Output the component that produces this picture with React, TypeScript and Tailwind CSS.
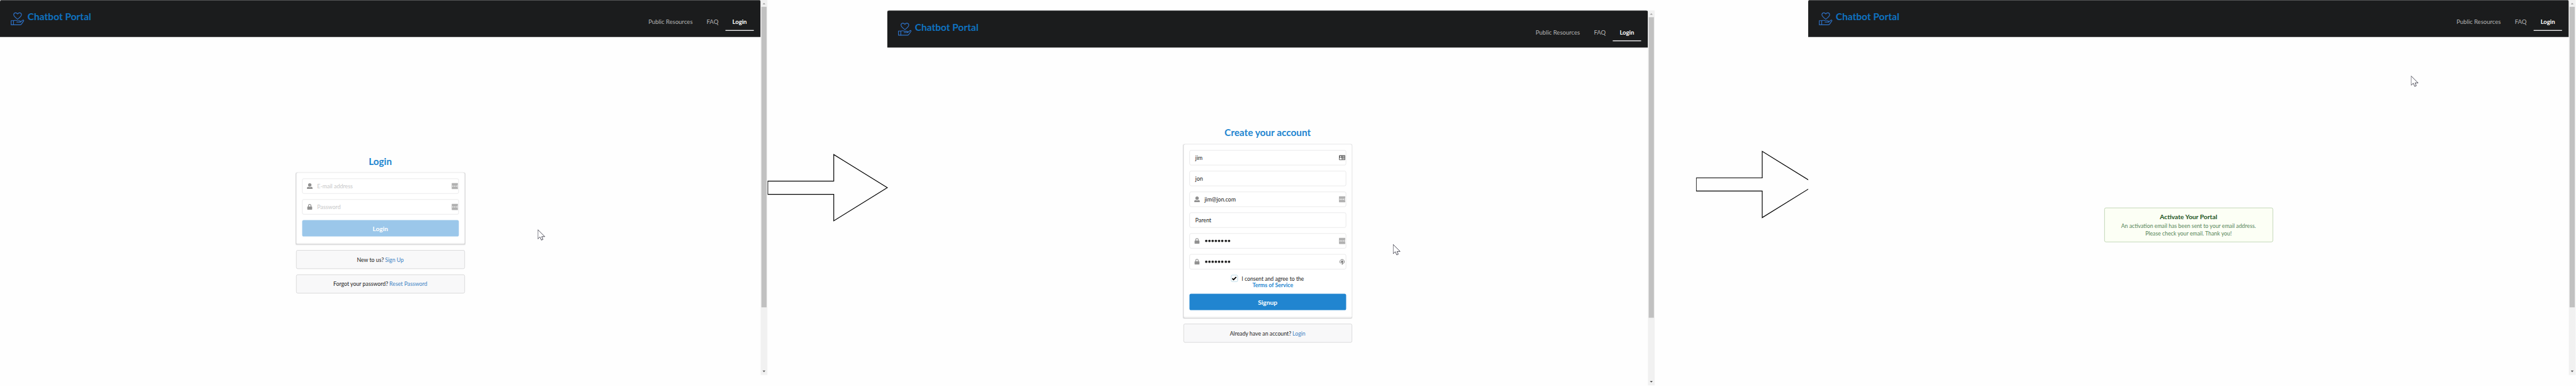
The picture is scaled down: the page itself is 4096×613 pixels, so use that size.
import type { ReactNode } from 'react';

function LogoIcon() {
  return (
    <svg className="mt-[29px] ml-[26px] h-[34px] w-[35px] shrink-0" viewBox="0 0 35 34" fill="none" stroke="#2e72c8" strokeWidth="1.8" strokeLinejoin="round" strokeLinecap="round">
      <path d="M18 18 C12.5 13.500 8.300 10.800 8.300 6.800 C8.300 1.500 15.200 .2 18 5 C20.800 .2 27.700 1.500 27.700 6.800 C27.700 10.800 23.500 13.500 18 18Z" />
      <path d="M1.900 21.500 H7.800 V32 H1.900Z" />
      <path d="M7.800 22 C11 20 14 20.600 16.500 22 H22.500 C25.500 22 25.500 25 23 25.200 L16 25.500 H25 L30.500 20.600 C32 19.400 34.500 20.600 33 22.600 L27.500 30.500 C26.500 31.800 25.500 32 24 32 H7.800" />
    </svg>
  );
}

function UserIcon() {
  return (
    <svg className="ml-[11px] h-[14px] w-[14px] shrink-0" viewBox="0 0 14 14" fill="#919191">
      <circle cx="7" cy="4.200" r="4.200" />
      <path d="M0 14 V12 C0 9.800 1.600 9 3.300 9 C5.500 10.200 8.500 10.200 10.700 9 C12.400 9 14 9.800 14 12 V14Z" />
    </svg>
  );
}

function LockIcon() {
  return (
    <svg className="ml-[11px] h-[14px] w-[14px] shrink-0" viewBox="0 0 14 14">
      <path d="M3.800 7 V4 A3.100 3.200 0 0 1 10 4 V7" fill="none" stroke="#919191" strokeWidth="1.800" />
      <rect x=".8" y="6" width="12.200" height="8" rx="1.200" fill="#919191" />
    </svg>
  );
}

function VaultIcon() {
  return (
    <svg className="mr-px h-4 w-4 shrink-0" viewBox="0 0 16 16">
      <rect width="16" height="16" rx="1.500" fill="#b1b1b1" />
      <circle cx="2.900" cy="8" r="1.400" fill="#fff" />
      <circle cx="7.200" cy="8" r="1.400" fill="#fff" />
      <circle cx="11.500" cy="8" r="1.400" fill="#fff" />
      <rect x="14.200" y="5" width=".8" height="6" fill="#fff" />
    </svg>
  );
}

function CardIcon() {
  return (
    <svg className="mr-px h-4 w-4 shrink-0" viewBox="0 0 16 16">
      <rect y="2" width="16" height="12" rx="1.500" fill="#636363" />
      <circle cx="4.300" cy="5.700" r="1.700" fill="#fff" />
      <path d="M1.500 12.500 V10 Q2 8 4.300 8 Q6.600 8 7 10 V12.500Z" fill="#fff" />
      <path d="M8.500 4.800 H14.500 M8.500 7.300 H14.500 M8.500 9.800 H14.500 M8.500 12.200 H14.500" stroke="#fff" strokeWidth="1" />
    </svg>
  );
}

function RefreshLockIcon() {
  return (
    <svg className="mr-px h-4 w-4 shrink-0" viewBox="0 0 16 16" fill="none" stroke="#636363">
      <path d="M4.500 12.400 A5.600 5.600 0 1 1 11 12.600 L8 13.300" strokeWidth="1.300" />
      <path d="M9 11.300 L6.300 13.300 L9 15.500Z" fill="#636363" stroke="none" />
      <path d="M6.500 7 V6 A1.500 1.500 0 0 1 9.500 6 V7" strokeWidth="1" />
      <rect x="5.300" y="6.800" width="5.400" height="3.700" fill="#636363" stroke="none" />
    </svg>
  );
}

function Cursor({ className }: { className: string }) {
  return (
    <svg className={`absolute h-[28px] w-[20px] ${className}`} viewBox="0 0 20 28">
      <path d="M.5 .8 V24 L6 19 L9.500 27 L13.500 25.300 L10.300 18.300 H18Z" fill="#fff" stroke="#1b1b2b" strokeWidth="1.2" />
    </svg>
  );
}

function NavBar() {
  return (
    <header className="flex h-[93px] justify-between rounded-t-[4px] border-y border-[#555657] bg-[#1b1c1d]">
      <div className="flex">
        <LogoIcon />
        <span className="mt-[26px] ml-[8px] text-[24.400px] leading-[30px] font-bold text-[#0f72c0]">Chatbot Portal</span>
      </div>
      <nav className="mt-[35px] mr-[17px] flex h-[41px] text-[15px] leading-[37px] text-[#b4b4b4]">
        <span className="px-[17.500px]">Public Resources</span>
        <span className="px-[17.500px]">FAQ</span>
        <span className="border-b-2 border-white px-[17.500px] font-bold text-white">Login</span>
      </nav>
    </header>
  );
}

function ScrollBar() {
  return (
    <div className="flex h-[937px] w-[17px] shrink-0 flex-col items-center bg-[#f1f1f1]">
      <svg className="h-[17px] w-[17px] shrink-0" viewBox="0 0 17 17">
        <path d="M5 11 L8.500 7 L12 11Z" fill="#a3a3a3" />
      </svg>
      <div className="h-[751px] w-[13px] bg-[#c1c1c1]" />
      <svg className="mt-auto h-[17px] w-[17px] shrink-0" viewBox="0 0 17 17">
        <path d="M5 6 H12 L8.500 10Z" fill="#505050" />
      </svg>
    </div>
  );
}

function Screen({ className, children }: { className: string; children: ReactNode }) {
  return (
    <section className={`relative flex h-[937px] shrink-0 ${className}`}>
      <div className="flex w-[1903px] shrink-0 flex-col">
        <NavBar />
        <main className="flex flex-col items-center">{children}</main>
      </div>
      <ScrollBar />
    </section>
  );
}

type FieldProps = { icon?: ReactNode; action?: ReactNode; children: ReactNode; className?: string };

function Field({ icon, action, children, className = 'text-[#212121]' }: FieldProps) {
  return (
    <div className={`flex h-[38px] items-center rounded-[4px] border border-[#dededf] bg-white ${className}`}>
      {icon}
      <span className={icon ? 'ml-3 grow' : 'ml-[14px] grow'}>{children}</span>
      {action}
    </div>
  );
}

function Panel({ className, children }: { className: string; children: ReactNode }) {
  return (
    <div className={`flex w-[422px] flex-col rounded-[4px] border border-[#d9d9da] bg-[#f7f7f7] shadow-[0_1px_2px_rgba(34,36,38,0.2)] ${className}`}>
      <div className="flex grow flex-col rounded-t-[4px] border-b border-[#d0d0d1] bg-white p-[14px]">{children}</div>
      <div className="h-[2px] shrink-0" />
    </div>
  );
}

function Note({ text, link }: { text: string; link: string }) {
  return (
    <div className="mt-[14px] flex h-[47px] w-[422px] items-center justify-center gap-[3px] rounded-[4px] border border-[#c7c8c9] bg-[#f8f8f9] text-[13.800px] text-[#212121]">
      <span>{text}</span>
      <span className="text-[#4183c4]">{link}</span>
    </div>
  );
}

function Dots() {
  return (
    <span className="flex gap-[2.100px] pl-[1.500px]">
      {Array.from({ length: 8 }, (_, i) => (
        <i key={i} className="size-[6px] rounded-full bg-[#212121]" />
      ))}
    </span>
  );
}

function Arrow() {
  return (
    <svg className="h-[170px] w-[302px] shrink-0" viewBox="0 0 302 170" fill="none" stroke="#000" strokeWidth="1.900">
      <path d="M.9 68.500 H166 V2.200 L300 85 L166 167.800 V101.500 H.9Z" />
    </svg>
  );
}

export default function App() {
  return (
    <div className="h-[613px] w-[4096px] overflow-hidden bg-[#fefefe]">
      <div className="flex h-[964px] w-[6445px] origin-top-left scale-[0.63553] overflow-hidden bg-[#fefefe] font-['Lato',sans-serif] text-[14px] leading-[20px] whitespace-nowrap">
        <Screen className="w-[1920px]">
          <h1 className="mt-[295px] text-[24px] leading-[30px] font-bold text-[#2185d0]">Login</h1>
          <Panel className="mt-[13px] h-[180px]">
            <div className="flex flex-col gap-[14px]">
              <Field icon={<UserIcon />} action={<VaultIcon />} className="text-[#c7c7c8]">E-mail address</Field>
              <Field icon={<LockIcon />} action={<VaultIcon />} className="text-[#c7c7c8]">Password</Field>
              <button className="h-[41px] rounded-[4px] bg-[#9bc7ea] text-[16px] font-bold text-white">Login</button>
            </div>
          </Panel>
          <Note text="New to us?" link="Sign Up" />
          <Note text="Forgot your password?" link="Reset Password" />
          <Cursor className="top-[573px] left-[1345px]" />
        </Screen>

        <div className="mt-[384px] w-[300px] shrink-0">
          <Arrow />
        </div>

        <Screen className="mt-[26px] w-[1920px]">
          <h1 className="mt-[197px] text-[24.150px] leading-[30px] font-bold text-[#2185d0]">Create your account</h1>
          <Panel className="mt-[14px] h-[435px]">
            <div className="flex flex-col gap-[14px]">
              <Field action={<CardIcon />}>jim</Field>
              <Field>jon</Field>
              <Field icon={<UserIcon />} action={<VaultIcon />}>jim@jon.com</Field>
              <Field>Parent</Field>
              <Field icon={<LockIcon />} action={<VaultIcon />}><Dots /></Field>
              <Field icon={<LockIcon />} action={<RefreshLockIcon />}><Dots /></Field>
              <div className="flex h-[33px] justify-center gap-[10px] pr-px">
                <span className="flex size-[17px] items-center justify-center rounded-[3px] border border-[#96c8da] bg-white">
                  <svg className="h-[10px] w-[12px]" viewBox="0 0 12 10" fill="none" stroke="#000" strokeWidth="2.800">
                    <path d="M1 4.800 L4.300 8 L11 1.300" />
                  </svg>
                </span>
                <span className="mt-[2px] flex flex-col items-center leading-[15px] text-[#212121]">
                  <span className="text-[13.660px]">I consent and agree to the</span>
                  <span className="font-bold text-[#2185d0]">Terms of Service</span>
                </span>
              </div>
              <button className="h-[41px] rounded-[4px] bg-[#2185d0] text-[16px] font-bold text-white">Signup</button>
            </div>
          </Panel>
          <Note text="Already have an account?" link="Login" />
          <Cursor className="top-[584px] left-[1265px]" />
        </Screen>

        <div className="mt-[376px] ml-[103px] w-[281px] shrink-0 overflow-hidden">
          <Arrow />
        </div>

        <Screen className="w-[1920px]">
          <div className="mt-[426px] flex h-[86px] w-[422px] flex-col items-center rounded-[4px] border border-[#a3c293] bg-[#fcfff5] pt-[11px] text-[13.770px] text-[#568558]">
            <strong className="text-[16.200px] text-[#1a531b]">Activate Your Portal</strong>
            <span className="mt-[2.500px] leading-[19px]">An activation email has been sent to your email address.</span>
            <span className="leading-[19px]">Please check your email. Thank you!</span>
          </div>
          <Cursor className="top-[189px] left-[1508px]" />
        </Screen>
      </div>
    </div>
  );
}
